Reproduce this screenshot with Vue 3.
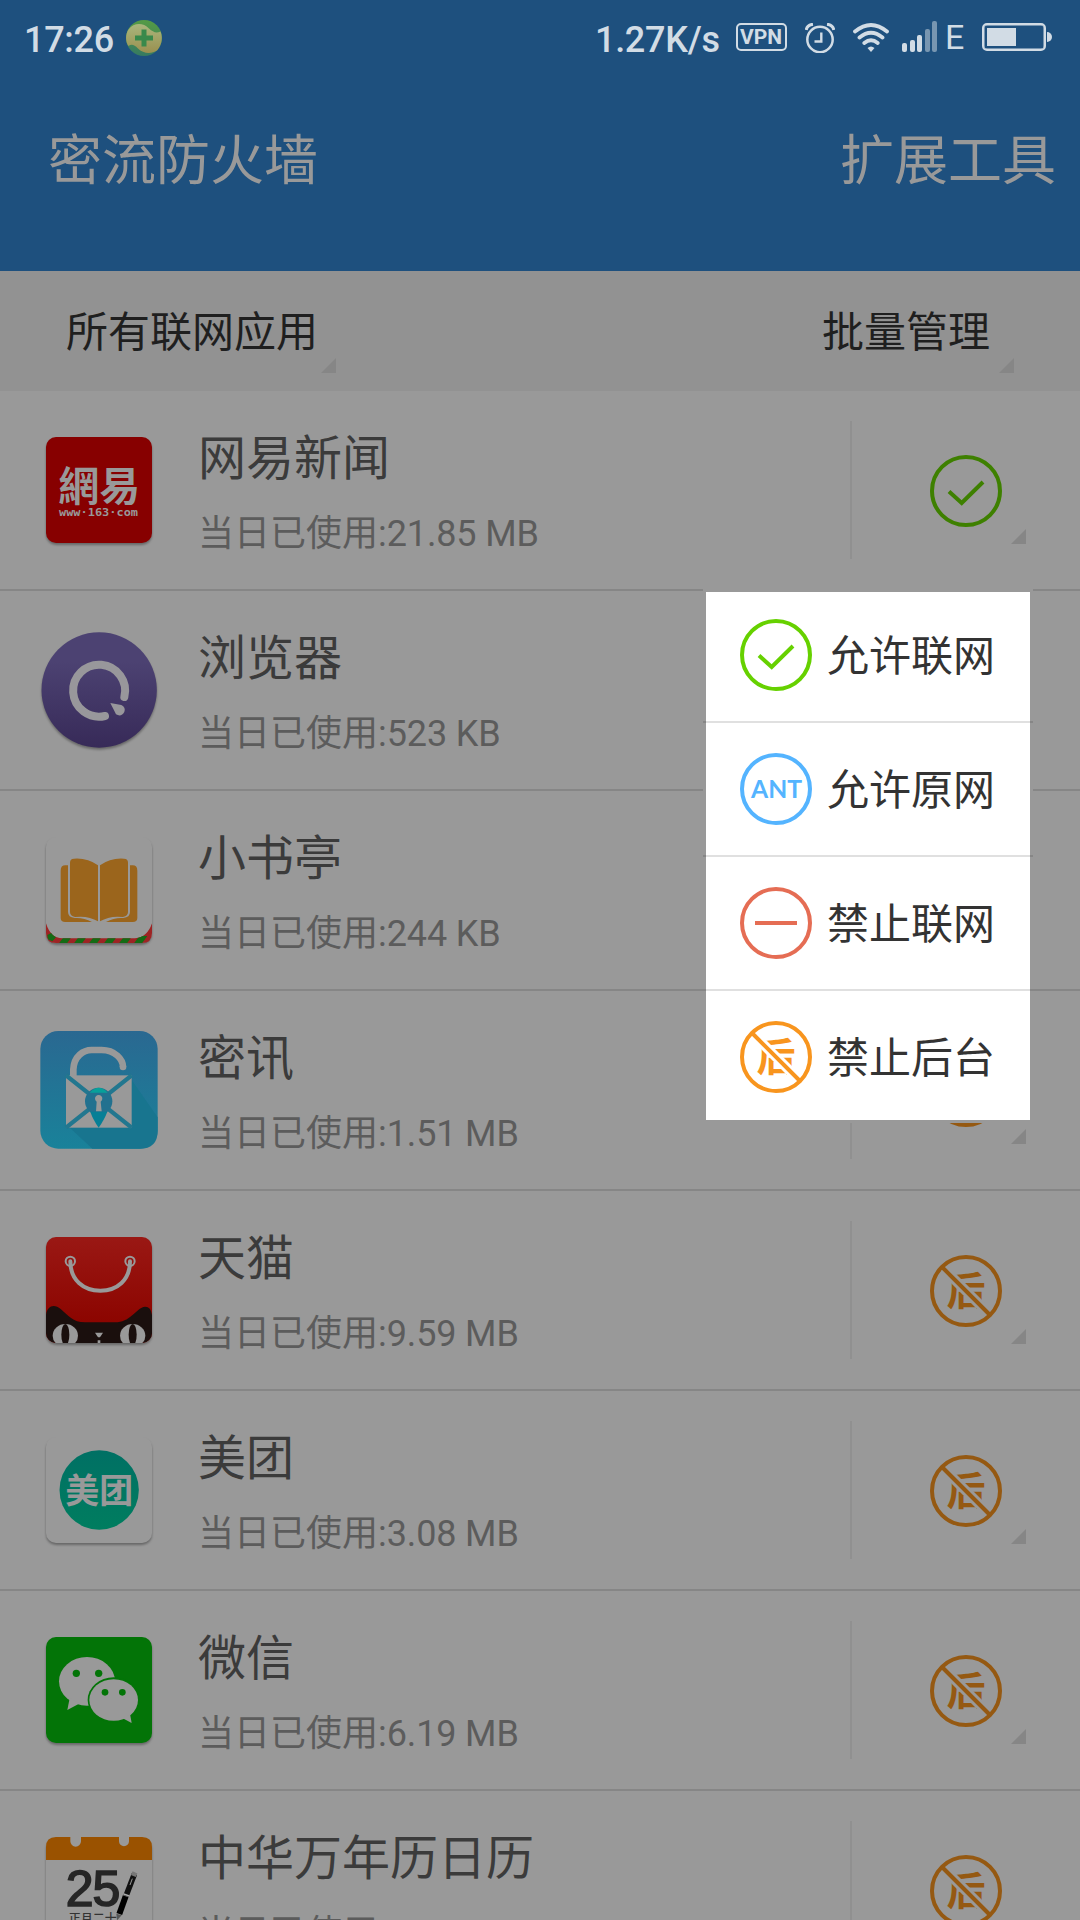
<template>
  <div class="page">
    <div class="status-bar">
      <span class="time">17:26</span>
      <svg class="guard" viewBox="0 0 36 36">
        <defs>
          <linearGradient id="guardBg" x1="0" y1="0" x2="0" y2="1">
            <stop offset="0" stop-color="#559b45" />
            <stop offset="1" stop-color="#367a61" />
          </linearGradient>
          <linearGradient id="guardFg" x1="0" y1="0" x2="0" y2="1">
            <stop offset="0" stop-color="#a9b67c" />
            <stop offset="1" stop-color="#9a9050" />
          </linearGradient>
        </defs>
        <circle cx="18" cy="18" r="18" fill="url(#guardBg)" />
        <path d="M2.5 9.5C8 2.500 17 2.500 23 8.500C27 12 30 13.500 34.500 11.500C38 20 33.500 28 31 30.500C25 34.500 17 33.500 12 28.500C8 24 5 24 2.500 26C-1 21 -0.500 14 2.500 9.500Z" fill="url(#guardFg)" />
        <path d="M18 9.500V26.500M9 18H27" stroke="#38894b" stroke-width="5" />
      </svg>
      <span class="speed">1.27K/s</span>
      <span class="vpn">VPN</span>
      <svg class="alarm" viewBox="0 0 30 30" fill="none" stroke="#d2dce5">
        <circle cx="15" cy="16.500" r="12.700" stroke-width="2.500" />
        <path d="M16.300 9.500V18.500H9.500" stroke-width="2.400" />
        <path d="M1.200 7Q2 2 8 1.200M28.800 7Q28 2 22 1.200" stroke-width="3" />
      </svg>
      <svg class="wifi" viewBox="0 0 36 30" fill="none" stroke="#d2dce5" stroke-width="3.800" stroke-linecap="round">
        <path d="M2 8.500Q18 -4.500 34 8.500M6.500 14.500Q18 5 29.500 14.500M11.300 20Q18 14.500 24.700 20" />
        <path d="M14.500 25Q18 22 21.500 25L18 29Z" fill="#d2dce5" stroke="none" />
      </svg>
      <div class="signal">
        <i
          v-for="bar in signalBars"
          :key="bar.height"
          :class="{ weak: bar.weak }"
          :style="{ height: bar.height + 'px' }"
        ></i>
      </div>
      <span class="net-type">E</span>
      <div class="battery"><i></i></div>
      <div class="battery-cap"></div>
    </div>

    <div class="header">
      <span>密流防火墙</span>
      <span>扩展工具</span>
    </div>

    <div class="toolbar">
      <div class="dropdown">所有联网应用</div>
      <div class="dropdown right">批量管理</div>
    </div>

    <div class="app-list">
      <div class="app-row" v-for="app in apps" :key="app.name">
        <svg class="app-icon" viewBox="0 0 480 420">
          <template v-if="app.icon === 'news'">
            <rect class="tile" x="78" y="51" width="318" height="318" rx="30" fill="#870000" />
            <text class="seal" x="115" y="243" textLength="246" lengthAdjust="spacingAndGlyphs">網易</text>
            <text class="site" x="117" y="287" textLength="237" lengthAdjust="spacingAndGlyphs">www·163·com</text>
          </template>

          <template v-else-if="app.icon === 'browser'">
            <defs>
              <linearGradient id="browserBg" x1="0" y1="0" x2="0" y2="1">
                <stop offset="0.250" stop-color="#4c4272" />
                <stop offset="1" stop-color="#372a58" />
              </linearGradient>
            </defs>
            <circle class="tile" cx="237.500" cy="210" r="173" fill="url(#browserBg)" />
            <path d="M255 288A78 78 0 1 1 313 231" fill="none" stroke="#98979b" stroke-width="24" stroke-linecap="round" />
            <path d="M271 249L304 255Q318 262 313 276Q304 292 288 283Z" fill="#98979b" />
          </template>

          <template v-else-if="app.icon === 'book'">
            <rect class="tile" x="78" y="51" width="318" height="318" rx="30" fill="#999" />
            <g v-for="side in ['', 'translate(474 0) scale(-1 1)']" :key="side" :transform="side" fill="#9b651c">
              <path d="M150 128Q150 116 162 116Q202 113 234 136V304Q205 286 165 291Q150 288 150 276Z" />
              <path d="M122 152Q122 136 136 136H144V276Q144 292 164 294Q190 292 216 306H136Q122 306 122 294Z" />
            </g>
            <clipPath id="ribbon">
              <path d="M78 310Q92 355 127 355H345Q382 352 396 310V339Q396 369 366 369H108Q78 369 78 339Z" />
            </clipPath>
            <g clip-path="url(#ribbon)">
              <rect x="78" y="300" width="318" height="70" fill="#9e2424" />
              <path d="M82 345L95 338L108 352L97 364L84 358Z" fill="#146b14" />
              <path
                v-for="n in 6"
                :key="n"
                :d="`M${72 + n * 45} 370l16 -22h24l-16 22z`"
                fill="#146b14"
              />
            </g>
          </template>

          <template v-else-if="app.icon === 'lock'">
            <defs>
              <linearGradient id="lockBg" x1="0" y1="0" x2="0" y2="1">
                <stop offset="0" stop-color="#2a6891" />
                <stop offset="1" stop-color="#19829a" />
              </linearGradient>
            </defs>
            <rect x="61" y="33" width="352" height="353" rx="54" fill="url(#lockBg)" />
            <path d="M335 180L413 292V332Q413 386 359 386H217L148 322H335Z" fill="#18758f" />
            <path d="M160 170V148C162 108 190 90 215 90H245C285 90 309 118 309 141" fill="none" stroke="#999" stroke-width="20" />
            <circle cx="309" cy="141" r="10" fill="#999" />
            <rect x="138" y="166" width="197" height="157" fill="#999" />
            <path d="M138 166L335 323M335 166L138 323" stroke="#22778f" stroke-width="13" />
            <circle cx="236" cy="244" r="41" fill="#22718f" />
            <path d="M209 218Q236 188 263 218Z" fill="#08a09a" />
            <path d="M211 275H262Q254 297 236 323Q218 297 211 275Z" fill="#067f96" />
            <path d="M228 274L230 245A11 11 0 1 1 242 245L245 274Z" fill="#999" />
          </template>

          <template v-else-if="app.icon === 'tmall'">
            <defs>
              <linearGradient id="tmallBg" x1="0" y1="0" x2="0" y2="1">
                <stop offset="0" stop-color="#9a1814" />
                <stop offset="0.800" stop-color="#8c0500" />
              </linearGradient>
              <clipPath id="tmallClip">
                <rect x="78" y="51" width="318" height="318" rx="30" />
              </clipPath>
            </defs>
            <rect class="tile" x="78" y="51" width="318" height="318" rx="30" fill="url(#tmallBg)" />
            <g fill="none" stroke="#999">
              <circle cx="151" cy="124" r="14" stroke-width="6" />
              <circle cx="330" cy="124" r="14" stroke-width="6" />
              <path d="M151 124C151 180 190 212 241 212S330 180 330 124" stroke-width="12" stroke-linecap="round" />
            </g>
            <g clip-path="url(#tmallClip)">
              <path d="M78 285C82 255 104 252 122 267C145 286 158 307 195 307H285C330 307 345 270 370 261Q392 256 396 285V369H78Z" fill="#1a0f0d" />
              <ellipse cx="136" cy="347" rx="38" ry="35" fill="#999" />
              <ellipse cx="338" cy="347" rx="38" ry="35" fill="#999" />
              <ellipse cx="136" cy="344" rx="12" ry="32" fill="#1a0f0d" />
              <ellipse cx="338" cy="344" rx="12" ry="32" fill="#1a0f0d" />
              <path d="M225 338H249L240 352H234ZM233 361H241V369H233Z" fill="#999" />
            </g>
          </template>

          <template v-else-if="app.icon === 'meituan'">
            <defs>
              <linearGradient id="meituanBg" x1="0" y1="0" x2="0" y2="1">
                <stop offset="0" stop-color="#007064" />
                <stop offset="1" stop-color="#007d5f" />
              </linearGradient>
            </defs>
            <rect class="tile" x="78" y="51" width="318" height="318" rx="30" fill="#999" />
            <circle cx="237.500" cy="210" r="119" fill="url(#meituanBg)" />
            <text class="meituan" x="136" y="249" textLength="204">美团</text>
          </template>

          <template v-else-if="app.icon === 'wechat'">
            <rect class="tile" x="78" y="51" width="318" height="318" rx="30" fill="#037407" />
            <g fill="#999">
              <ellipse cx="201" cy="184" rx="84" ry="73" />
              <path d="M149 235L142 270L180 250Z" />
            </g>
            <ellipse cx="281" cy="240" rx="78" ry="68" fill="#037407" />
            <g fill="#999">
              <ellipse cx="281" cy="240" rx="73" ry="62.500" />
              <path d="M308 295L335 309L330 282Z" />
            </g>
            <g fill="#037407">
              <circle cx="169" cy="160" r="11" />
              <circle cx="236" cy="160" r="11" />
              <circle cx="255" cy="217" r="10" />
              <circle cx="307" cy="217" r="10" />
            </g>
          </template>

          <template v-else>
            <rect class="tile" x="78" y="51" width="318" height="400" rx="30" fill="#999" />
            <path d="M78 120V81Q78 51 108 51H151V64A16 16 0 0 0 183 64V51H297V64A15 15 0 0 0 327 64V51H366Q396 51 396 81V120Z" fill="#9a5200" />
            <text class="day" x="137" y="259" textLength="164">25</text>
            <text class="lunar" x="146" y="310" textLength="144">正月二十</text>
            <path d="M343 163L318 228" stroke="#111" stroke-width="17" />
            <path d="M337 176L330 195" stroke="#999" stroke-width="3" />
            <path d="M340 168L345 157" stroke="#777" stroke-width="16" />
            <path d="M317 229L298 282" stroke="#000" stroke-width="18" />
            <path d="M311 222L328 228" stroke="#aaa" stroke-width="4" />
            <path d="M289 281L305 286L291 301Z" fill="#555" />
          </template>
        </svg>

        <div class="info">
          <div class="name">{{ app.name }}</div>
          <div class="usage">当日已使用:<span>{{ app.usage }}</span></div>
        </div>

        <div class="state">
          <svg class="state-icon" viewBox="0 0 72 72" :class="app.state">
            <circle class="line" cx="36" cy="36" r="34" />
            <path v-if="app.state === 'allow'" class="line" d="M19 36.500L31.700 48L53 27" />
            <template v-else>
              <text class="hou" x="36" y="50" text-anchor="middle">后</text>
              <path class="gap" d="M15 15L57 57" />
              <path class="line" d="M12 12L60 60" />
            </template>
          </svg>
        </div>
      </div>
    </div>

    <!-- 联网权限菜单 -->
    <div class="menu">
      <div class="menu-item" v-for="item in menuItems" :key="item.label">
        <svg class="state-icon light" viewBox="0 0 72 72" :class="item.state">
          <circle class="line" cx="36" cy="36" r="34" />
          <path v-if="item.state === 'allow'" class="line" d="M19 36.500L31.700 48L53 27" />
          <text v-else-if="item.state === 'origin'" class="ant" x="11" y="44.500" textLength="51" lengthAdjust="spacingAndGlyphs">ANT</text>
          <path v-else-if="item.state === 'deny'" class="line" d="M15 36H57" />
          <template v-else>
            <text class="hou" x="36" y="50" text-anchor="middle">后</text>
            <path class="gap" d="M15 15L57 57" />
            <path class="line" d="M12 12L60 60" />
          </template>
        </svg>
        <span>{{ item.label }}</span>
      </div>
    </div>
  </div>
</template>

<script setup>
  import { ref } from 'vue'

  const signalBars = [
    { height: 9 },
    { height: 12 },
    { height: 17 },
    { height: 23, weak: true },
    { height: 31, weak: true }
  ]

  const apps = ref([
    { name: '网易新闻', usage: '21.85 MB', icon: 'news', state: 'allow' },
    { name: '浏览器', usage: '523 KB', icon: 'browser', state: 'background' },
    { name: '小书亭', usage: '244 KB', icon: 'book', state: 'background' },
    { name: '密讯', usage: '1.51 MB', icon: 'lock', state: 'background' },
    { name: '天猫', usage: '9.59 MB', icon: 'tmall', state: 'background' },
    { name: '美团', usage: '3.08 MB', icon: 'meituan', state: 'background' },
    { name: '微信', usage: '6.19 MB', icon: 'wechat', state: 'background' },
    { name: '中华万年历日历', usage: '', icon: 'calendar', state: 'background' }
  ])

  const menuItems = [
    { label: '允许联网', state: 'allow' },
    { label: '允许原网', state: 'origin' },
    { label: '禁止联网', state: 'deny' },
    { label: '禁止后台', state: 'background' }
  ]
</script>

<style>
  body {
    margin: 0;
    background: #999;
  }
</style>

<style scoped>
  .page {
    position: relative;
    width: 1080px;
    height: 1920px;
    overflow: hidden;
    background: #999;
    font-family: Roboto, "Noto Sans CJK SC", sans-serif;
    white-space: nowrap;
  }

  .status-bar {
    display: flex;
    align-items: flex-start;
    box-sizing: border-box;
    height: 76px;
    padding: 18px 28px 0 24px;
    background: #1e507e;
    color: #d2dce5;
    font-size: 36px;
    font-weight: 500;
    line-height: 42px;
  }

  .time {
    width: 102px;
    padding-top: 1px;
    letter-spacing: -0.3px;
  }

  .guard {
    width: 36px;
    height: 36px;
    margin-top: 2px;
  }

  .speed {
    width: 141px;
    margin-left: auto;
    padding-top: 1px;
    letter-spacing: -0.3px;
  }

  .vpn {
    box-sizing: border-box;
    width: 51px;
    height: 28px;
    margin: 5px 18px 0 0;
    border: 2.5px solid #d2dce5;
    border-radius: 5px;
    font-size: 21px;
    font-weight: 700;
    line-height: 25px;
    text-indent: -1px;
    text-align: center;
  }

  .alarm {
    width: 30px;
    height: 30px;
    margin: 5px 18px 0 0;
  }

  .wifi {
    width: 36px;
    height: 30px;
    margin: 5px 13px 0 0;
  }

  .signal {
    display: flex;
    align-items: flex-end;
    justify-content: space-between;
    width: 35px;
    height: 34px;
    margin-right: 8px;

    i {
      width: 5px;
      border-radius: 2px;
      background: #d2dce5;
    }

    .weak {
      background: #7896b1;
    }
  }

  .net-type {
    width: 37px;
    font-size: 34px;
    font-weight: 400;
    line-height: 38px;
  }

  .battery {
    box-sizing: border-box;
    width: 64px;
    height: 28px;
    margin-top: 5px;
    padding: 3px;
    border: 2px solid #d2dce5;
    border-radius: 5px;
    box-shadow: inset 0 0 0 0.5px #d2dce5;

    i {
      display: block;
      width: 29px;
      height: 18px;
      background: #d2dce5;
    }
  }

  .battery-cap {
    width: 5px;
    height: 10px;
    margin: 14px 0 0 1px;
    border-radius: 0 5px 5px 0;
    background: #d2dce5;
  }

  .header {
    display: flex;
    justify-content: space-between;
    box-sizing: border-box;
    height: 195px;
    padding: 47px 24px 0 48px;
    background: #1e507e;
    color: #999;
    font-size: 54px;
    line-height: 78px;
  }

  .toolbar {
    display: flex;
    justify-content: space-between;
    height: 120px;
    padding: 0 66px;
    background: #929292;
    color: #1f1f1f;
    font-size: 42px;
    line-height: 124px;
  }

  .dropdown {
    position: relative;
    padding-right: 18px;
  }

  .dropdown.right {
    padding-right: 24px;
  }

  /* 右下角小三角 */
  .dropdown::after,
  .state::after {
    content: "";
    position: absolute;
    right: 0;
    bottom: 18px;
    width: 15px;
    height: 15px;
    background: #868686;
    clip-path: polygon(100% 0, 100% 100%, 0 100%);
  }

  .app-row {
    display: flex;
    box-sizing: border-box;
    height: 200px;
    border-bottom: 2px solid #868686;
  }

  .app-icon {
    flex: none;
    width: 160px;
    height: 140px;
    margin: 29px 18px 0 20px;

    .tile {
      filter: drop-shadow(0 6px 3px rgba(0, 0, 0, 0.32));
    }

    .seal {
      fill: #999;
      font: 700 122px "Noto Sans CJK TC", sans-serif;
    }

    .site {
      fill: #999;
      font: 700 32px "DejaVu Sans Mono", monospace;
    }

    .meituan {
      fill: #999;
      font: 700 102px "Noto Sans CJK SC", sans-serif;
    }

    .day {
      fill: #262626;
      stroke: #262626;
      stroke-width: 5px;
      font: 400 150px "Liberation Sans", sans-serif;
    }

    .lunar {
      fill: #333;
      font: 500 36px "Noto Sans CJK SC", sans-serif;
    }
  }

  .info {
    flex: 1;
    padding-top: 33px;
  }

  .name {
    height: 70px;
    color: #3b3b3b;
    font-size: 48px;
    line-height: 70px;
  }

  .usage {
    margin-top: 13px;
    color: #5c5c5c;
    font-size: 36px;
    line-height: 54px;

    span {
      letter-spacing: -0.15px;
    }
  }

  .state {
    position: relative;
    box-sizing: border-box;
    width: 176px;
    height: 138px;
    margin: 30px 54px 0 0;
    padding: 34px 0 0 78px;
    border-left: 2px solid #909090;
  }

  .state::after {
    bottom: 15px;
  }

  .state-icon {
    display: block;
    flex: none;
    width: 72px;
    height: 72px;
    --c: #955912;
    --bg: #999;

    .line {
      fill: none;
      stroke: var(--c);
      stroke-width: 4;
    }

    .gap {
      fill: none;
      stroke: var(--bg);
      stroke-width: 10;
    }

    text {
      fill: var(--c);
    }

    .hou {
      font: 700 39px "Noto Sans CJK SC", sans-serif;
    }

    .ant {
      font: 700 24px Lato, sans-serif;
    }
  }

  .state-icon.allow {
    --c: #3e8000;
  }

  .state-icon.light {
    --c: #f8951e;
    --bg: #fff;
  }

  .state-icon.light.allow {
    --c: #66d100;
  }

  .state-icon.light.origin {
    --c: #54b4ff;
  }

  .state-icon.light.deny {
    --c: #e56d54;
  }

  .menu {
    position: absolute;
    top: 589px;
    left: 703px;
    box-sizing: border-box;
    width: 330px;
    height: 534px;
    background: linear-gradient(#fff, #fff) 3px 3px / 324px 528px no-repeat #999;
    color: #333;
    font-size: 42px;
  }

  .menu-item {
    display: flex;
    align-items: center;
    gap: 15px;
    height: 132px;
    padding-left: 37px;

    span {
      padding-bottom: 5px;
    }
  }

  .menu-item + .menu-item {
    border-top: 2px solid rgba(0, 0, 0, 0.12);
  }
</style>
